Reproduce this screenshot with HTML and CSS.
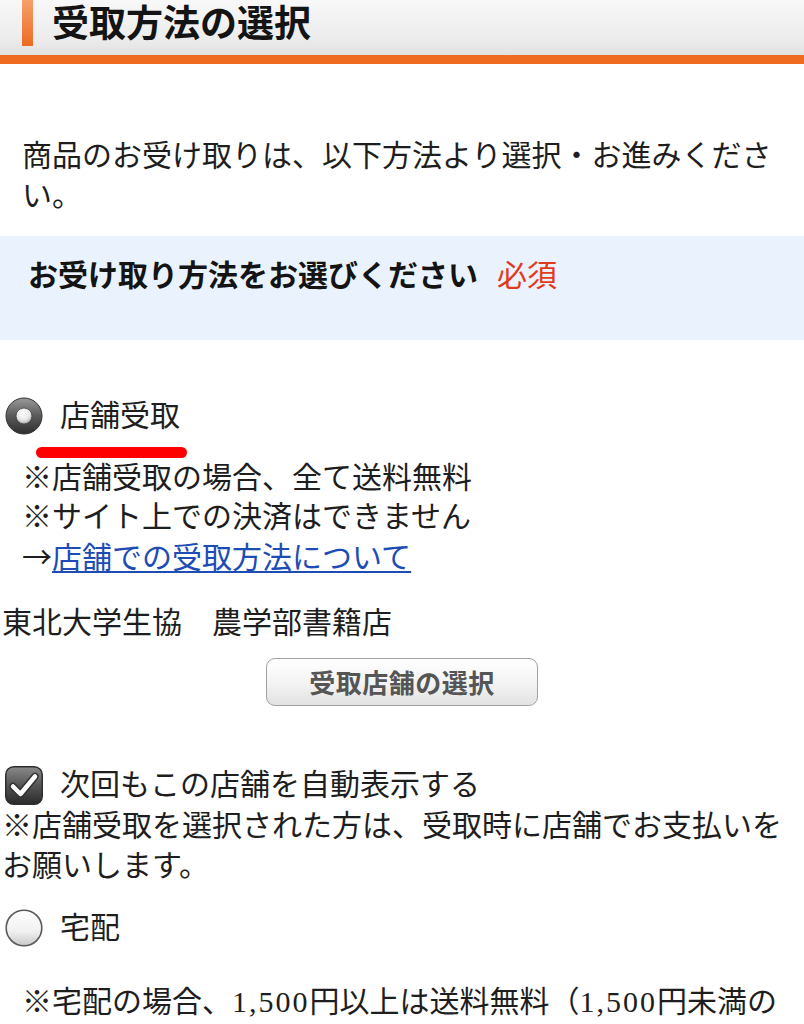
FILE: index.html
```html
<!DOCTYPE html>
<html lang="ja">
<head>
<meta charset="utf-8">
<title>受取方法の選択</title>
<link rel="stylesheet" href="styles.css">
</head>
<body>
<header class="head">
  <span class="head-bar"></span>
  <h1 class="head-title">受取方法の選択</h1>
</header>

<p class="intro">商品のお受け取りは、以下方法より選択・お進みください。</p>

<div class="req">
  <span class="req-label">お受け取り方法をお選びください</span><span class="req-mark">必須</span>
</div>

<div class="opt opt-store">
  <svg class="radio" width="38" height="38" viewBox="0 0 38 38">
    <defs>
      <linearGradient id="rg1" x1="0" y1="0" x2="0" y2="1">
        <stop offset="0" stop-color="#9a9a9a"/>
        <stop offset="0.5" stop-color="#5a5a5a"/>
        <stop offset="1" stop-color="#2e2e2e"/>
      </linearGradient>
      <radialGradient id="rg2" cx="0.45" cy="0.35" r="0.7">
        <stop offset="0" stop-color="#ffffff"/>
        <stop offset="0.6" stop-color="#e6e6e6"/>
        <stop offset="1" stop-color="#9a9a9a"/>
      </radialGradient>
    </defs>
    <circle cx="19" cy="19" r="18" fill="url(#rg1)" stroke="#333" stroke-width="1"/>
    <circle cx="19" cy="19" r="8" fill="url(#rg2)" stroke="#444" stroke-width="0.8"/>
  </svg>
  <span class="opt-label opt-label-marked">店舗受取</span>
</div>

<div class="notes">
  <div>※店舗受取の場合、全て送料無料</div>
  <div>※サイト上での決済はできません</div>
  <div><span class="arrow">→</span><a class="link" href="#">店舗での受取方法について</a></div>
</div>

<div class="store">東北大学生協　農学部書籍店</div>

<div class="btn-row">
  <button class="btn" type="button">受取店舗の選択</button>
</div>

<div class="chk-row">
  <svg class="chk" width="38" height="39" viewBox="0 0 38 39">
    <defs>
      <linearGradient id="cg1" x1="0" y1="0" x2="0" y2="1">
        <stop offset="0" stop-color="#8a8a8a"/>
        <stop offset="0.5" stop-color="#555"/>
        <stop offset="1" stop-color="#2a2a2a"/>
      </linearGradient>
    </defs>
    <rect x="0.75" y="0.75" width="36.5" height="37.5" rx="8" ry="8" fill="url(#cg1)" stroke="#2e2e2e" stroke-width="1.5"/>
    <path d="M8 20.5 L15.5 28 L30 10.5" fill="none" stroke="#333" stroke-width="7.5" stroke-linecap="round" stroke-linejoin="round"/>
    <path d="M8 20.5 L15.5 28 L30 10.5" fill="none" stroke="#fff" stroke-width="4.5" stroke-linecap="round" stroke-linejoin="round"/>
  </svg>
  <span class="opt-label">次回もこの店舗を自動表示する</span>
</div>

<p class="warn">※店舗受取を選択された方は、受取時に店舗でお支払いをお願いします。</p>

<div class="opt opt-home">
  <svg class="radio" width="38" height="38" viewBox="0 0 38 38">
    <defs>
      <linearGradient id="rg3" x1="0" y1="0" x2="0" y2="1">
        <stop offset="0" stop-color="#ffffff"/>
        <stop offset="0.6" stop-color="#f0f0f0"/>
        <stop offset="1" stop-color="#c8c8c8"/>
      </linearGradient>
    </defs>
    <circle cx="19" cy="19" r="17.8" fill="url(#rg3)" stroke="#5a5a5a" stroke-width="1.6"/>
  </svg>
  <span class="opt-label">宅配</span>
</div>

<p class="delivery">※宅配の場合、<span class="num">1,500</span>円以上は送料無料（<span class="num">1,500</span>円未満の</p>
</body>
</html>
```

FILE: styles.css
```css
* {
  box-sizing: border-box;
}

html, body {
  margin: 0;
  padding: 0;
  background: #ffffff;
}

body {
  width: 804px;
  font-family: "Liberation Serif", "Noto Sans CJK JP", serif;
  font-size: 30px;
  line-height: 40px;
  color: #1e1e1e;
}

p {
  margin: 0;
}

.head {
  display: flex;
  align-items: flex-start;
  gap: 19px;
  height: 64px;
  padding-left: 22px;
  background: linear-gradient(#f8f8f8, #ececec 70%, #e2e2e2);
  border-bottom: 9px solid #ee6b1f;
}

.head-bar {
  width: 11px;
  height: 46px;
  background: linear-gradient(#f6a06a, #ec6a22);
}

.head-title {
  margin: 0;
  font-size: 37px;
  line-height: 50px;
  font-weight: 700;
  color: #141414;
}

.intro {
  margin: 72px 22px 20px 22px;
  line-height: 40px;
}

.req {
  background: #eaf2fd;
  padding: 20px 28px 44px 28px;
  line-height: 40px;
}

.req-label {
  font-weight: 700;
  color: #141414;
}

.req-mark {
  margin-left: 19px;
  color: #e23a1c;
}

.opt {
  display: flex;
  align-items: center;
  gap: 17px;
  height: 40px;
  padding-left: 5px;
}

.opt-store {
  margin-top: 56px;
}

.opt-home {
  margin-top: 22px;
}

.radio, .chk {
  flex: none;
  display: block;
}

.opt-label {
  position: relative;
  line-height: 40px;
}

.opt-label-marked::after {
  content: "";
  position: absolute;
  left: -24px;
  top: 51px;
  width: 151px;
  height: 11px;
  border-radius: 6px;
  background: #ff0000;
}

.notes {
  margin-top: 22px;
  padding-left: 22px;
  line-height: 39px;
}

.arrow {
  font-family: "Noto Sans CJK JP", sans-serif;
}

.link {
  color: #1d4cb4;
  text-decoration: underline;
  text-underline-offset: 3px;
  text-decoration-thickness: 2px;
}

.store {
  margin-top: 26px;
  padding-left: 2px;
  line-height: 39px;
}

.btn-row {
  display: flex;
  justify-content: center;
  margin-top: 16px;
}

.btn {
  width: 272px;
  height: 48px;
  margin: 0;
  padding: 0;
  border: 1.5px solid #a2a2a2;
  border-radius: 9px;
  background: linear-gradient(#ffffff, #f4f4f4 50%, #e2e2e2);
  font-family: "Noto Sans CJK JP", sans-serif;
  font-size: 26px;
  font-weight: 700;
  line-height: 44px;
  color: #555555;
  letter-spacing: 0.5px;
}

.chk-row {
  display: flex;
  align-items: center;
  gap: 17px;
  height: 40px;
  margin-top: 59px;
  padding-left: 5px;
}

.warn {
  margin-top: 1px;
  padding-left: 2px;
  line-height: 40px;
}

.delivery {
  margin-top: 34px;
  padding: 0 22px;
  line-height: 40px;
  white-space: nowrap;
}

.num {
  letter-spacing: 2px;
}
```
